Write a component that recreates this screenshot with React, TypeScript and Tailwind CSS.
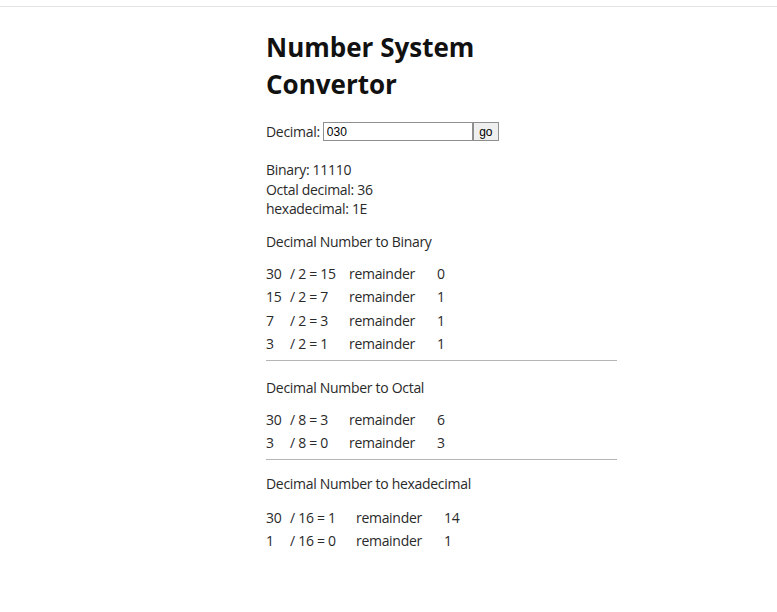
import React from "react";

const rowsBin = [
  ["30", "/ 2 = 15", "remainder", "0"],
  ["15", "/ 2 = 7", "remainder", "1"],
  ["7", "/ 2 = 3", "remainder", "1"],
  ["3", "/ 2 = 1", "remainder", "1"],
];
const rowsOct = [
  ["30", "/ 8 = 3", "remainder", "6"],
  ["3", "/ 8 = 0", "remainder", "3"],
];
const rowsHex = [
  ["30", "/ 16 = 1", "remainder", "14"],
  ["1", "/ 16 = 0", "remainder", "1"],
];

function Steps({ rows, widths }: { rows: string[][]; widths: string[] }) {
  return (
    <div className="flex flex-col">
      {rows.map((r, i) => (
        <div key={i} className="flex h-[23.5px] items-center">
          <span className={widths[0]}>{r[0]}</span>
          <span className={widths[1]}>{r[1]}</span>
          <span className={widths[2]}>{r[2]}</span>
          <span>{r[3]}</span>
        </div>
      ))}
    </div>
  );
}

export default function App() {
  return (
    <div
      className="min-h-[612px] bg-white text-[#2a2a2a] text-[14px] tracking-[-0.3px]"
      style={{ fontFamily: '"Open Sans", "Noto Sans", sans-serif' }}
    >
      <div className="h-[7px] border-b border-[#e3e3e3]" />
      <div className="ml-[266px] w-[351px]">
        <h1 className="mt-[22px] w-[240px] text-[26px] font-bold leading-[37px] tracking-normal text-[#111]">
          Number System Convertor
        </h1>
        <div className="mt-[19px] flex items-center h-[19px]">
          <span className="mr-[3px]">Decimal:</span>
          <input
            defaultValue="030"
            className="h-[19px] w-[150px] border border-[#8f8f8f] px-[3px] text-[12px] tracking-normal text-black outline-none"
            style={{ fontFamily: '"Liberation Sans", Arial, sans-serif' }}
          />
          <button
            className="h-[19px] w-[26px] border border-[#8f8f8f] bg-[#efefef] text-[12px] leading-none tracking-normal text-black"
            style={{ fontFamily: '"Liberation Sans", Arial, sans-serif' }}
          >
            go
          </button>
        </div>
        <div className="mt-[19px] leading-[19.5px]">
          <div>Binary: 11110</div>
          <div>Octal decimal: 36</div>
          <div>hexadecimal: 1E</div>
        </div>
        <div className="mt-[12px]">Decimal Number to Binary</div>
        <div className="mt-[10px]">
          <Steps rows={rowsBin} widths={["w-[24px]", "w-[59px]", "w-[88px]"]} />
        </div>
        <div className="mt-[4px] border-t border-[#b5b5b5]" />
        <div className="mt-[16px]">Decimal Number to Octal</div>
        <div className="mt-[10px]">
          <Steps rows={rowsOct} widths={["w-[24px]", "w-[59px]", "w-[88px]"]} />
        </div>
        <div className="mt-[4px] border-t border-[#b5b5b5]" />
        <div className="mt-[13px]">Decimal Number to hexadecimal</div>
        <div className="mt-[12px]">
          <Steps rows={rowsHex} widths={["w-[24px]", "w-[66px]", "w-[88px]"]} />
        </div>
      </div>
    </div>
  );
}
